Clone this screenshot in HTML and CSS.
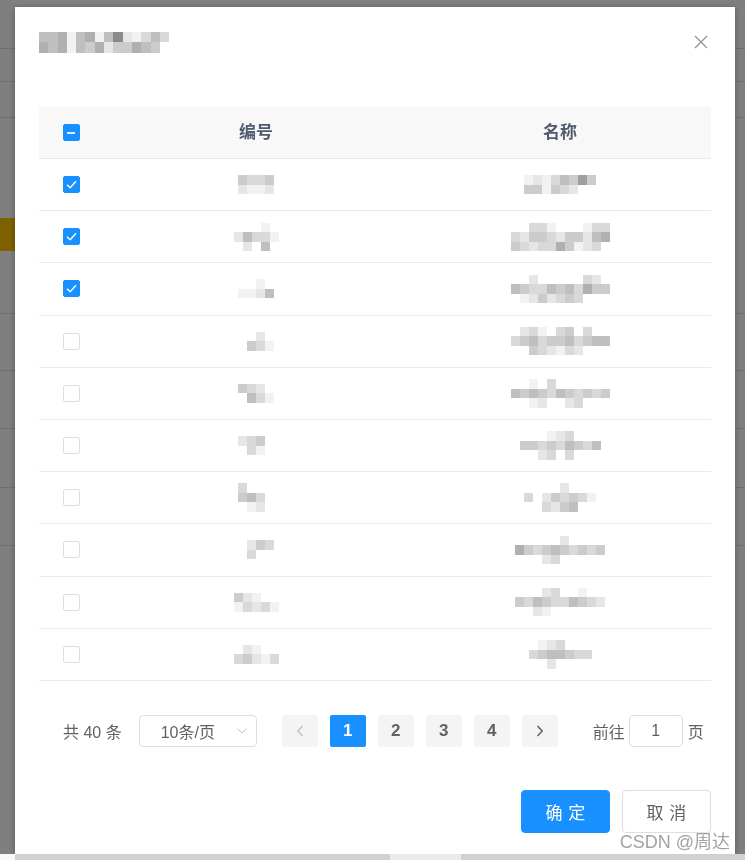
FILE: index.html
```html
<!DOCTYPE html>
<html lang="zh-CN">
<head>
<meta charset="utf-8">
<title>选择记录</title>
<link rel="stylesheet" href="styles.css">
</head>
<body>
<div class="page">
  <div class="bg-row bg-top"></div>
  <div class="bg-row bg-r1"></div>
  <div class="bg-row bg-r2"></div>
  <div class="bg-row bg-r3"><span class="bg-btn"></span></div>
  <div class="bg-row bg-r4"></div>
  <div class="bg-row bg-r5"></div>
  <div class="bg-row bg-r6"></div>
  <div class="bg-row bg-r7"></div>
</div>

<div class="overlay">
  <div class="dialog">
    <div class="dlg-header">
      <span class="mz title-mz">
        <i class="e"></i><i class="e"></i><i class="f"></i><i class="a"></i><i class="e"></i><i class="f"></i><i class="a"></i><i class="e"></i><i class="h"></i><i class="b"></i><i class="a"></i><i class="c"></i><i class="e"></i><i class="c"></i>
        <i class="f"></i><i class="e"></i><i class="f"></i><i class="a"></i><i class="e"></i><i class="d"></i><i class="f"></i><i class="b"></i><i class="d"></i><i class="d"></i><i class="f"></i><i class="e"></i><i class="d"></i><i></i>
      </span>
      <button class="close" aria-label="关闭">
        <svg width="16" height="16" viewBox="0 0 16 16"><path d="M2 2 L14 14 M14 2 L2 14" stroke="#909399" stroke-width="1.3" fill="none"/></svg>
      </button>
    </div>

    <div class="tbl">
      <div class="thead">
        <div class="td"><span class="cb on half"></span></div>
        <div class="th">编号</div>
        <div class="th">名称</div>
      </div>

      <div class="tr">
        <div class="td"><span class="cb on"><svg class="ck" width="17" height="17" viewBox="0 0 17 17"><path d="M4 8.8 L7.2 11.8 L13 5.2" stroke="#fff" stroke-width="1.4" fill="none"/></svg></span></div>
        <div class="td"><span class="mz c4"><i class="d"></i><i class="c"></i><i class="c"></i><i class="d"></i><i class="b"></i><i class="a"></i><i class="a"></i><i class="b"></i></span></div>
        <div class="td"><span class="mz c8"><i class="a"></i><i class="b"></i><i class="a"></i><i class="c"></i><i class="e"></i><i class="d"></i><i class="g"></i><i class="d"></i><i class="d"></i><i class="d"></i><i class="a"></i><i class="d"></i><i class="c"></i><i class="b"></i><i></i><i></i></span></div>
      </div>

      <div class="tr">
        <div class="td"><span class="cb on"><svg class="ck" width="17" height="17" viewBox="0 0 17 17"><path d="M4 8.8 L7.2 11.8 L13 5.2" stroke="#fff" stroke-width="1.4" fill="none"/></svg></span></div>
        <div class="td"><span class="mz c5"><i></i><i></i><i></i><i class="a"></i><i></i><i class="b"></i><i class="e"></i><i class="c"></i><i class="c"></i><i class="a"></i><i></i><i class="b"></i><i></i><i class="e"></i><i></i></span></div>
        <div class="td"><span class="mz c11"><i></i><i></i><i class="c"></i><i class="c"></i><i class="a"></i><i></i><i></i><i></i><i class="a"></i><i class="c"></i><i class="c"></i><i class="c"></i><i class="b"></i><i class="d"></i><i class="d"></i><i class="c"></i><i class="b"></i><i class="d"></i><i class="d"></i><i class="b"></i><i class="e"></i><i class="f"></i><i class="d"></i><i class="c"></i><i class="b"></i><i class="c"></i><i class="c"></i><i class="f"></i><i class="d"></i><i class="a"></i><i class="b"></i><i class="c"></i><i></i></span></div>
      </div>

      <div class="tr">
        <div class="td"><span class="cb on"><svg class="ck" width="17" height="17" viewBox="0 0 17 17"><path d="M4 8.8 L7.2 11.8 L13 5.2" stroke="#fff" stroke-width="1.4" fill="none"/></svg></span></div>
        <div class="td"><span class="mz c4"><i></i><i></i><i class="a"></i><i></i><i class="a"></i><i class="a"></i><i class="b"></i><i class="e"></i></span></div>
        <div class="td"><span class="mz c11"><i></i><i></i><i class="b"></i><i></i><i></i><i></i><i></i><i></i><i class="c"></i><i class="b"></i><i></i><i class="e"></i><i class="d"></i><i class="c"></i><i class="c"></i><i class="e"></i><i class="d"></i><i class="e"></i><i class="c"></i><i class="f"></i><i class="d"></i><i class="d"></i><i></i><i class="a"></i><i class="b"></i><i class="d"></i><i class="b"></i><i class="c"></i><i class="d"></i><i class="c"></i><i></i><i></i><i></i></span></div>
      </div>

      <div class="tr">
        <div class="td"><span class="cb"></span></div>
        <div class="td"><span class="mz c4"><i></i><i></i><i class="b"></i><i></i><i></i><i class="d"></i><i class="c"></i><i class="a"></i></span></div>
        <div class="td"><span class="mz c11"><i></i><i class="b"></i><i class="c"></i><i class="a"></i><i></i><i class="c"></i><i class="d"></i><i></i><i class="c"></i><i></i><i></i><i class="c"></i><i class="d"></i><i class="e"></i><i class="c"></i><i class="d"></i><i class="d"></i><i class="e"></i><i class="c"></i><i class="d"></i><i class="e"></i><i class="e"></i><i></i><i></i><i class="d"></i><i class="c"></i><i class="b"></i><i class="a"></i><i class="c"></i><i class="b"></i><i></i><i></i><i></i></span></div>
      </div>

      <div class="tr">
        <div class="td"><span class="cb"></span></div>
        <div class="td"><span class="mz c4"><i class="d"></i><i class="c"></i><i class="b"></i><i></i><i></i><i class="e"></i><i class="c"></i><i class="a"></i></span></div>
        <div class="td"><span class="mz c11"><i></i><i></i><i class="a"></i><i></i><i class="c"></i><i></i><i></i><i></i><i></i><i></i><i></i><i class="e"></i><i class="d"></i><i class="e"></i><i class="d"></i><i class="c"></i><i class="e"></i><i class="d"></i><i class="c"></i><i class="d"></i><i class="c"></i><i class="d"></i><i></i><i></i><i class="a"></i><i class="b"></i><i></i><i></i><i class="b"></i><i class="c"></i><i></i><i></i><i></i></span></div>
      </div>

      <div class="tr">
        <div class="td"><span class="cb"></span></div>
        <div class="td"><span class="mz c4"><i class="b"></i><i class="c"></i><i class="d"></i><i></i><i></i><i class="c"></i><i class="a"></i><i></i></span></div>
        <div class="td"><span class="mz c9"><i></i><i></i><i></i><i class="a"></i><i class="b"></i><i class="c"></i><i></i><i></i><i></i><i class="d"></i><i class="d"></i><i class="c"></i><i class="d"></i><i class="c"></i><i class="e"></i><i class="d"></i><i class="c"></i><i class="e"></i><i></i><i></i><i class="b"></i><i class="c"></i><i></i><i class="c"></i><i></i><i></i><i></i></span></div>
      </div>

      <div class="tr">
        <div class="td"><span class="cb"></span></div>
        <div class="td"><span class="mz c4"><i class="c"></i><i></i><i></i><i></i><i class="d"></i><i class="e"></i><i class="c"></i><i></i><i></i><i class="a"></i><i class="b"></i><i></i></span></div>
        <div class="td"><span class="mz c8"><i></i><i></i><i></i><i></i><i class="b"></i><i></i><i></i><i></i><i class="c"></i><i></i><i class="b"></i><i class="d"></i><i class="c"></i><i class="d"></i><i class="c"></i><i class="a"></i><i></i><i></i><i class="c"></i><i class="b"></i><i class="d"></i><i class="e"></i><i></i><i></i></span></div>
      </div>

      <div class="tr">
        <div class="td"><span class="cb"></span></div>
        <div class="td"><span class="mz c4"><i></i><i class="b"></i><i class="d"></i><i class="c"></i><i></i><i class="c"></i><i></i><i></i></span></div>
        <div class="td"><span class="mz c10"><i></i><i></i><i></i><i></i><i></i><i class="b"></i><i></i><i></i><i></i><i></i><i class="f"></i><i class="d"></i><i class="c"></i><i class="d"></i><i class="e"></i><i class="d"></i><i class="c"></i><i class="d"></i><i class="c"></i><i class="d"></i><i></i><i></i><i></i><i class="b"></i><i class="c"></i><i></i><i></i><i></i><i></i><i></i></span></div>
      </div>

      <div class="tr">
        <div class="td"><span class="cb"></span></div>
        <div class="td"><span class="mz c5"><i class="d"></i><i class="b"></i><i class="a"></i><i></i><i></i><i class="a"></i><i class="c"></i><i class="b"></i><i class="c"></i><i class="a"></i></span></div>
        <div class="td"><span class="mz c10"><i></i><i></i><i></i><i class="b"></i><i class="c"></i><i></i><i></i><i class="a"></i><i></i><i></i><i class="d"></i><i class="c"></i><i class="e"></i><i class="d"></i><i class="c"></i><i class="c"></i><i class="e"></i><i class="d"></i><i class="c"></i><i class="b"></i><i></i><i></i><i class="b"></i><i class="a"></i><i></i><i></i><i></i><i></i><i></i><i></i></span></div>
      </div>

      <div class="tr">
        <div class="td"><span class="cb"></span></div>
        <div class="td"><span class="mz c5"><i></i><i class="b"></i><i class="a"></i><i></i><i></i><i class="c"></i><i class="d"></i><i class="b"></i><i class="a"></i><i class="c"></i></span></div>
        <div class="td"><span class="mz c7"><i></i><i class="a"></i><i class="b"></i><i class="c"></i><i></i><i></i><i></i><i class="c"></i><i class="d"></i><i class="e"></i><i class="e"></i><i class="d"></i><i class="c"></i><i class="c"></i><i></i><i></i><i class="b"></i><i></i><i></i><i></i><i></i></span></div>
      </div>
    </div>

    <div class="pager">
      <span class="total">共 40 条</span>
      <span class="sizes">
        <span class="sizes-text">10条/页</span>
        <svg class="sizes-arrow" width="10" height="6" viewBox="0 0 10 6"><path d="M0.5 0.8 L5 5 L9.5 0.8" stroke="#c0c4cc" stroke-width="1" fill="none"/></svg>
      </span>
      <span class="pbtn prev"><svg width="8" height="12" viewBox="0 0 8 12"><path d="M6.5 1 L1.8 6 L6.5 11" stroke="#c0c4cc" stroke-width="1.5" fill="none"/></svg></span>
      <span class="pbtn active">1</span>
      <span class="pbtn">2</span>
      <span class="pbtn">3</span>
      <span class="pbtn">4</span>
      <span class="pbtn next"><svg width="8" height="12" viewBox="0 0 8 12"><path d="M1.5 1 L6.2 6 L1.5 11" stroke="#606266" stroke-width="1.5" fill="none"/></svg></span>
      <span class="jump">前往</span>
      <span class="jump-input">1</span>
      <span class="jump-unit">页</span>
    </div>

    <div class="dlg-footer">
      <button class="btn primary"><span>确定</span></button>
      <button class="btn"><span>取消</span></button>
    </div>
  </div>
</div>

<div class="watermark">CSDN @周达</div>

<div class="hscroll"><span class="hs-a"></span><span class="hs-b"></span><span class="hs-c"></span><span class="hs-d"></span></div>
</body>
</html>
```

FILE: styles.css
```css
html, body {
  margin: 0;
  height: 100%;
  overflow: hidden;
}

body {
  font-family: "Liberation Sans", "Noto Sans CJK SC", sans-serif;
  color: #606266;
  background: #fff;
}

/* underlying page (dimmed by overlay) */
.page {
  width: 100%;
}
.bg-row {
  box-sizing: border-box;
  border-bottom: 1px solid #dcdfe6;
}
.bg-top { height: 49px; }
.bg-r1 { height: 33px; }
.bg-r2 { height: 36px; }
.bg-r3 { height: 196px; padding-top: 100px; }
.bg-r4 { height: 57px; }
.bg-r5 { height: 58px; }
.bg-r6 { height: 59px; }
.bg-r7 { height: 58px; }
.bg-btn {
  display: block;
  width: 60px;
  height: 33px;
  background: #ffc000;
}

.overlay {
  position: fixed;
  inset: 0;
  background: rgba(0, 0, 0, 0.5);
  overflow: hidden;
}

.dialog {
  margin: 7px 0 0 15px;
  width: 720px;
  height: 920px;
  box-sizing: border-box;
  padding: 0 24px;
  background: #fff;
  box-shadow: 0 1px 6px rgba(0, 0, 0, 0.3);
}

.dlg-header {
  height: 70px;
  display: flex;
  align-items: center;
  justify-content: space-between;
}

.close {
  border: 0;
  background: none;
  padding: 0;
  margin-right: 2px;
  width: 16px;
  height: 16px;
  display: flex;
}

/* mosaic (redacted text) */
.mz {
  display: inline-grid;
  grid-auto-rows: 9.5px;
}
.mz i { display: block; }
.mz .a { background: #f2f2f2; }
.mz .b { background: #e6e6e6; }
.mz .c { background: #d9d9d9; }
.mz .d { background: #cccccc; }
.mz .e { background: #bfbfbf; }
.mz .f { background: #b0b0b0; }
.mz .g { background: #9e9e9e; }
.mz .h { background: #8a8a8a; }
.c4 { grid-template-columns: repeat(4, 9px); }
.c5 { grid-template-columns: repeat(5, 9px); }
.c7 { grid-template-columns: repeat(7, 9px); }
.c8 { grid-template-columns: repeat(8, 9px); }
.c9 { grid-template-columns: repeat(9, 9px); }
.c10 { grid-template-columns: repeat(10, 9px); }
.c11 { grid-template-columns: repeat(11, 9px); }
.title-mz {
  grid-template-columns: repeat(14, 9.3px);
  grid-auto-rows: 10.5px;
}

/* table */
.tbl {
  margin-top: 30px;
}
.thead, .tr {
  display: grid;
  grid-template-columns: 64px 306px 302px;
  align-items: center;
  box-sizing: border-box;
  border-bottom: 1px solid #e6e9ee;
}
.thead {
  height: 52px;
  background: #f8f8f9;
}
.tr {
  height: 52.2px;
}
.th {
  text-align: center;
  font-size: 17px;
  font-weight: bold;
  color: #515a6e;
  line-height: 24px;
}
.td {
  display: flex;
  justify-content: center;
  align-items: center;
}

.cb {
  width: 17px;
  height: 17px;
  box-sizing: border-box;
  border: 1px solid #dcdfe6;
  border-radius: 2px;
  background: #fff;
  display: flex;
  align-items: center;
  justify-content: center;
  position: relative;
}
.cb.on {
  background: #1890ff;
  border-color: #1890ff;
}
.cb .ck {
  position: absolute;
  left: -1px;
  top: -1px;
}
.cb.half::after {
  content: "";
  width: 8px;
  height: 2px;
  background: #e3f0ff;
}

/* pagination */
.pager {
  display: flex;
  align-items: center;
  height: 32px;
  margin-top: 34px;
  padding-left: 24px;
  font-size: 16px;
  color: #606266;
}
.total {
  white-space: pre;
}
.sizes {
  margin-left: 17px;
  width: 118px;
  height: 32px;
  box-sizing: border-box;
  border: 1px solid #dcdfe6;
  border-radius: 4px;
  display: flex;
  align-items: center;
  padding-left: 21px;
  padding-right: 9px;
}
.sizes-text {
  flex: 1;
}
.pbtn {
  width: 36px;
  height: 32px;
  margin-left: 12px;
  background: #f4f4f5;
  border-radius: 2px;
  display: flex;
  align-items: center;
  justify-content: center;
  font-weight: bold;
  font-size: 17px;
  color: #606266;
}
.pbtn.prev {
  margin-left: 25px;
}
.pbtn.active {
  background: #1890ff;
  color: #fff;
}
.jump {
  margin-left: 35px;
}
.jump-input {
  margin-left: 4px;
  width: 54px;
  height: 32px;
  box-sizing: border-box;
  border: 1px solid #dcdfe6;
  border-radius: 4px;
  display: flex;
  align-items: center;
  justify-content: center;
}
.jump-unit {
  margin-left: 5px;
}

/* footer */
.dlg-footer {
  display: flex;
  justify-content: flex-end;
  gap: 12px;
  margin-top: 43px;
}
.btn {
  width: 89px;
  height: 43px;
  box-sizing: border-box;
  border: 1px solid #dcdfe6;
  border-radius: 4px;
  background: #fff;
  color: #606266;
  font-family: "Liberation Sans", "Noto Sans CJK SC", sans-serif;
  font-size: 17px;
  padding: 0;
}
.btn span {
  letter-spacing: 0.34em;
  margin-right: -0.34em;
}
.btn.primary {
  background: #1890ff;
  border-color: #1890ff;
  color: #fff;
}

.watermark {
  position: fixed;
  right: 15px;
  bottom: 8px;
  font-size: 18px;
  line-height: 20px;
  color: #a3a3a3;
  text-shadow: 0 0 1px #fff, 0 0 1px #fff;
}

.hscroll {
  position: fixed;
  left: 0;
  right: 0;
  bottom: 0;
  height: 6px;
  display: flex;
}
.hs-a { width: 15px; background: #f8f8f8; }
.hs-b { width: 375px; background: #d1d1d1; }
.hs-c { width: 71px; background: #ebebeb; }
.hs-d { flex: 1; background: #d1d1d1; }
```
